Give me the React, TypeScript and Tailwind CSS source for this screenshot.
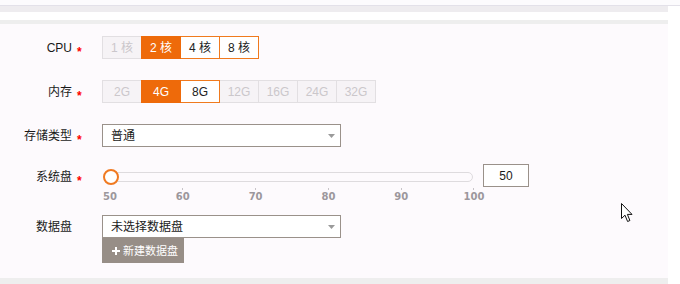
import React from "react";

const cpu = [
  { t: "1 核", s: "off" },
  { t: "2 核", s: "sel" },
  { t: "4 核", s: "on" },
  { t: "8 核", s: "on" },
];
const mem = [
  { t: "2G", s: "off" },
  { t: "4G", s: "sel" },
  { t: "8G", s: "on" },
  { t: "12G", s: "off" },
  { t: "16G", s: "off" },
  { t: "24G", s: "off" },
  { t: "32G", s: "off" },
];

function Opt({ t, s, first }: { t: string; s: string; first: boolean }) {
  const base =
    "w-[40px] h-[23px] flex items-center justify-center text-[12px] border " +
    (first ? "" : "-ml-px ");
  if (s === "sel")
    return <div className={base + "relative z-20 bg-[#ee6a0a] border-[#ee6a0a] text-white"}>{t}</div>;
  if (s === "on")
    return <div className={base + "relative z-10 bg-white border-[#f07a1e] text-[#222]"}>{t}</div>;
  return <div className={base + "bg-[#f6f3f6] border-[#e2dfe2] text-[#cbc7cb]"}>{t}</div>;
}

function Label({ text, star = true }: { text: string; star?: boolean }) {
  return (
    <div className="flex items-center h-[23px] shrink-0">
      <div className="w-[72px] text-right text-[12px] text-[#1a1a1a] leading-[14px]">{text}</div>
      <div className="w-[30px] flex items-center h-[23px]">
        {star && <span className="ml-[5px] mt-[8px] text-[12px] font-bold leading-[12px] text-[#f00]">*</span>}
      </div>
    </div>
  );
}

function Arrow() {
  return (
    <svg width="7" height="4" viewBox="0 0 7 4" className="shrink-0">
      <path d="M0 0 L7 0 L3.5 4 Z" fill="#9a9a9a" />
    </svg>
  );
}

function Select({ text }: { text: string }) {
  return (
    <div className="w-[239px] h-[23px] border border-[#9a918a] bg-white flex items-center justify-between pl-[8px] pr-[5px]">
      <span className="text-[12px] text-[#1a1a1a]">{text}</span>
      <Arrow />
    </div>
  );
}

export default function App() {
  const ticks = ["50", "60", "70", "80", "90", "100"];
  return (
    <div className="relative w-[680px] h-[284px] bg-white overflow-hidden font-['Liberation_Sans','Noto_Sans_CJK_SC',sans-serif]">
      <div className="h-[5px] bg-[#fcfbfd]" />
      <div className="h-[1px] bg-[#e3e1e9]" />
      <div className="w-[668px]">
        <div className="h-[6px] bg-[#eeecef]" />
        <div className="h-[8px] bg-white" />
        <div className="h-[4px] bg-[#eeeeee]" />
        <div className="h-[254px] bg-[#fdfafd] pt-[12px] flex flex-col">
          <div className="flex items-center">
            <Label text="CPU" />
            <div className="flex">
              {cpu.map((o, i) => (
                <Opt key={o.t} t={o.t} s={o.s} first={i === 0} />
              ))}
            </div>
          </div>
          <div className="flex items-center mt-[21px]">
            <Label text="内存" />
            <div className="flex">
              {mem.map((o, i) => (
                <Opt key={o.t} t={o.t} s={o.s} first={i === 0} />
              ))}
            </div>
          </div>
          <div className="flex items-center mt-[21px]">
            <Label text="存储类型" />
            <Select text="普通" />
          </div>
          <div className="flex items-start mt-[17px]">
            <div className="pt-[1px]">
              <Label text="系统盘" />
            </div>
            <div className="w-[381px] flex flex-col">
              <div className="relative h-[24px]">
                <div className="ml-[8px] mt-[8px] w-[363px] h-[10px] rounded-full border border-[#dedbde]" />
                <div className="absolute left-[1px] top-[5px] w-[16px] h-[16px] rounded-full border-2 border-[#f07a22] bg-white" />
              </div>
              <div className="ml-[-7px] w-[394px] flex justify-between">
                {ticks.map((t, i) => (
                  <div key={t} className="w-[30px] flex flex-col items-center">
                    <div className={"w-px h-[2px] mb-[1px] " + (i === 0 ? "" : "bg-[#c8c4c8]")} />
                    <div className="h-[12px] leading-[12px] text-[10px] font-bold text-[#9c979c] font-['DejaVu_Sans',sans-serif]">
                      {t}
                    </div>
                  </div>
                ))}
              </div>
            </div>
            <div className="w-[46px] h-[23px] border border-[#9a918a] bg-white flex items-center justify-center text-[12px] text-[#1a1a1a]">
              50
            </div>
          </div>
          <div className="flex items-start mt-[12px]">
            <Label text="数据盘" star={false} />
            <div className="flex flex-col">
              <Select text="未选择数据盘" />
              <div className="w-[82px] h-[25px] bg-[#978e87] flex items-center pl-[10px] text-white text-[11px]">
                <svg width="8" height="8" viewBox="0 0 8 8" className="mr-[3px] shrink-0">
                  <path d="M4 0 V8 M0 4 H8" stroke="white" strokeWidth="2" />
                </svg>
                <span className="leading-[14px]">新建数据盘</span>
              </div>
            </div>
          </div>
        </div>
        <div className="h-[6px] bg-[#eeeeee]" />
      </div>
      <svg
        className="absolute left-[621px] top-[203px]"
        width="13"
        height="20"
        viewBox="0 0 13 20"
      >
        <path
          d="M0.5 0.5 L0.5 15.5 L4 12.2 L6.6 18.5 L8.9 17.5 L6.4 11.4 L11 11.4 Z"
          fill="white"
          stroke="#111"
          strokeWidth="1"
          strokeLinejoin="miter"
        />
      </svg>
    </div>
  );
}
